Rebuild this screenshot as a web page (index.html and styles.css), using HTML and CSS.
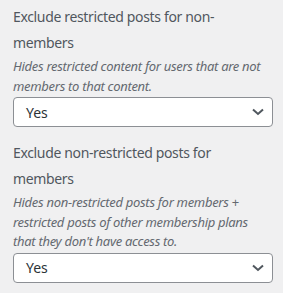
FILE: index.html
```html
<!DOCTYPE html>
<html lang="en">
<head>
    <meta charset="UTF-8">
    <meta name="viewport" content="width=device-width, initial-scale=1.0">
    <title>Membership options</title>
    <link rel="stylesheet" href="styles.css">
</head>
<body>
    <div class="panel">
        <div class="field">
            <label class="label">Exclude restricted posts for non-members</label>
            <p class="help">Hides restricted content for users that are not members to that content.</p>
            <div class="select">
                <span>Yes</span>
                <svg width="12" height="8" viewBox="0 0 12 8"><path d="M1 1.5 L6 6 L11 1.5" fill="none" stroke="#50575e" stroke-width="2"/></svg>
            </div>
        </div>
        <div class="field">
            <label class="label">Exclude non-restricted posts for members</label>
            <p class="help">Hides non-restricted posts for members + restricted posts of other membership plans that they don't have access to.</p>
            <div class="select">
                <span>Yes</span>
                <svg width="12" height="8" viewBox="0 0 12 8"><path d="M1 1.5 L6 6 L11 1.5" fill="none" stroke="#50575e" stroke-width="2"/></svg>
            </div>
        </div>
    </div>
</body>
</html>
```

FILE: styles.css
```css
html,
body {
    margin: 0;
    background-color: #f0f0f1;
}
.panel {
    font-family: "Noto Sans", "Open Sans", sans-serif;
    width: 260px;
    padding: 4px 0 0 13px;
    display: flex;
    flex-direction: column;
    gap: 13px;
}
.label {
    display: block;
    font-size: 14px;
    font-weight: 400;
    line-height: 25.5px;
    letter-spacing: -0.35px;
    color: #50575e;
}
.help {
    margin: 2px 0 1px;
    font-size: 13px;
    font-style: italic;
    line-height: 19.5px;
    letter-spacing: -0.3px;
    color: #646970;
}
.select {
    box-sizing: border-box;
    height: 30px;
    padding: 0 8px 0 12px;
    display: flex;
    align-items: center;
    justify-content: space-between;
    background: #fff;
    border: 1px solid #8c8f94;
    border-radius: 4px;
    font-size: 14px;
    color: #2c3338;
}
```
